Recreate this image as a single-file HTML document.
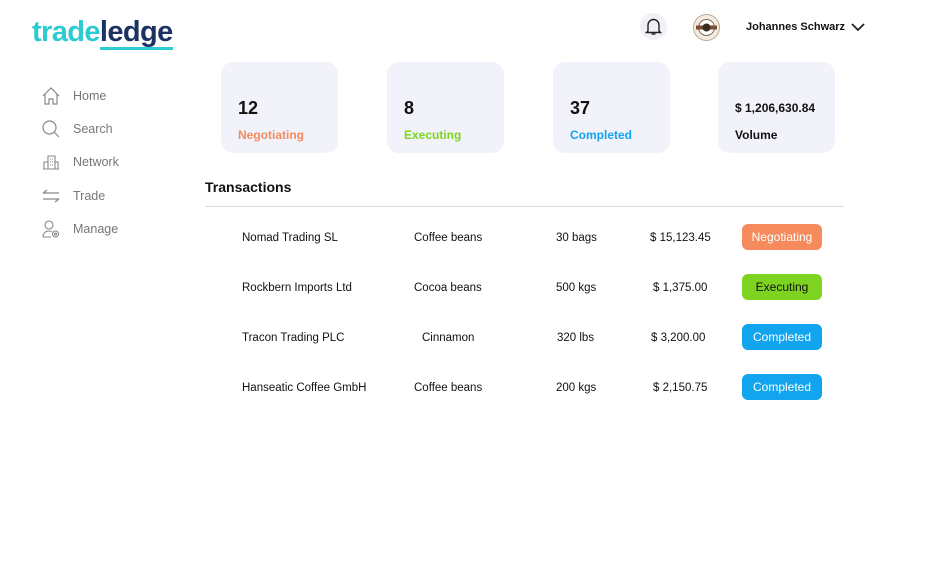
<!DOCTYPE html>
<html><head><style>
body{margin:0;width:926px;height:568px;background:#fff;font-family:"Liberation Sans",sans-serif;position:relative;overflow:hidden;color:#111}
.a{position:absolute}
.logo{left:32px;top:16px;font-size:29px;font-weight:bold;letter-spacing:-0.6px;line-height:32px}
.nav{left:42px;color:#777;font-size:12.5px}
.nav span{position:absolute;left:31px;top:2px}
.card{top:62px;width:117px;height:91px;background:#f2f3fa;border-radius:12px}
.card .n{position:absolute;left:17px;top:36px;font-size:18px;font-weight:bold}
.card .l{position:absolute;left:17px;top:66px;font-size:12px;font-weight:bold}
.row{left:242px;font-size:11.5px;width:600px;height:26px;line-height:26px}
.row div{position:absolute;top:1px}
.row .btn{top:0}
.btn{position:absolute;left:500px;width:80px;height:26px;border-radius:6px;color:#fff;text-align:center;line-height:26px;font-size:12px}
</style></head><body>
<div class="a logo"><span style="color:#2ccbd2">trade</span><span style="color:#1c3263;border-bottom:3px solid #2ccbd2;display:inline-block;line-height:30px">ledge</span></div>

<div class="a" style="left:640px;top:13px;width:27px;height:27px;border-radius:50%;background:#f0f1f6"></div>
<svg class="a" style="left:645px;top:17px" width="17" height="19" viewBox="0 0 17 19" fill="none" stroke="#222" stroke-width="1.4"><path d="M3 14V8a5.5 5.5 0 0 1 11 0v6l1.5 1.5h-14z"/><path d="M6.5 17h4"/></svg>
<svg class="a" style="left:693px;top:14px" width="27" height="27" viewBox="0 0 27 27"><circle cx="13.5" cy="13.5" r="13" fill="#f4ece4" stroke="#b9a997"/><circle cx="13.5" cy="13.5" r="8" fill="#fff" stroke="#8a6a50"/><rect x="3" y="11.5" width="21" height="4" fill="#7a4e30"/><circle cx="13.5" cy="13.5" r="4" fill="#3a2a20"/></svg>
<div class="a" style="left:746px;top:21px;font-size:11px;font-weight:bold">Johannes Schwarz</div>
<svg class="a" style="left:851px;top:23px" width="14" height="9" viewBox="0 0 14 9" fill="none" stroke="#222" stroke-width="1.8"><path d="M1 1l6 6 6-6"/></svg>

<div class="a nav" style="top:87px"><svg width="18" height="18" viewBox="0 0 18 18" fill="none" stroke="#888" stroke-width="1.2"><path d="M1 9L9 1l8 8M3 7v10h4v-5h4v5h4V7"/></svg><span>Home</span></div>
<div class="a nav" style="top:120px"><svg width="18" height="18" viewBox="0 0 18 18" fill="none" stroke="#888" stroke-width="1.2"><circle cx="7.5" cy="7.5" r="6.5"/><path d="M12.5 12.5L17 17"/></svg><span>Search</span></div>
<div class="a nav" style="top:153px"><svg width="18" height="18" viewBox="0 0 18 18" fill="none" stroke="#888" stroke-width="1.1"><path d="M1 16h16M2 16V9h4M6 16V3h7v13M13 9h3v7M8 6h1M10 6h1M8 9h1M10 9h1M8 12h1M10 12h1"/></svg><span>Network</span></div>
<div class="a nav" style="top:187px"><svg width="18" height="18" viewBox="0 0 18 18" fill="none" stroke="#888" stroke-width="1.2"><path d="M1 6h16M1 6l4-3M17 12H1M17 12l-4 3"/></svg><span>Trade</span></div>
<div class="a nav" style="top:220px"><svg width="18" height="18" viewBox="0 0 18 18" fill="none" stroke="#888" stroke-width="1.1"><circle cx="7" cy="5" r="4"/><path d="M1 17c0-4 3-6 6-6 1 0 2 .2 3 .7M1 17h8"/><circle cx="13.5" cy="14" r="3"/><circle cx="13.5" cy="14" r="1"/></svg><span>Manage</span></div>

<div class="a card" style="left:221px"><div class="n">12</div><div class="l" style="color:#f58b5c">Negotiating</div></div>
<div class="a card" style="left:387px"><div class="n">8</div><div class="l" style="color:#7ed321">Executing</div></div>
<div class="a card" style="left:553px"><div class="n">37</div><div class="l" style="color:#12a4ee">Completed</div></div>
<div class="a card" style="left:718px"><div class="n" style="font-size:12px;top:39px">$ 1,206,630.84</div><div class="l" style="color:#111">Volume</div></div>

<div class="a" style="left:205px;top:179px;font-size:14px;font-weight:bold">Transactions</div>
<div class="a" style="left:205px;top:206px;width:639px;height:1px;background:#ddd"></div>

<div class="a row" style="top:224px"><div style="left:0">Nomad Trading SL</div><div style="left:172px">Coffee beans</div><div style="left:314px">30 bags</div><div style="left:408px">$ 15,123.45</div><div class="btn" style="background:#f58b5c">Negotiating</div></div>
<div class="a row" style="top:274px"><div style="left:0">Rockbern Imports Ltd</div><div style="left:172px">Cocoa beans</div><div style="left:314px">500 kgs</div><div style="left:411px">$ 1,375.00</div><div class="btn" style="background:#7ed321;color:#111">Executing</div></div>
<div class="a row" style="top:324px"><div style="left:0">Tracon Trading PLC</div><div style="left:180px">Cinnamon</div><div style="left:315px">320 lbs</div><div style="left:409px">$ 3,200.00</div><div class="btn" style="background:#12a4ee">Completed</div></div>
<div class="a row" style="top:374px"><div style="left:0">Hanseatic Coffee GmbH</div><div style="left:172px">Coffee beans</div><div style="left:314px">200 kgs</div><div style="left:411px">$ 2,150.75</div><div class="btn" style="background:#12a4ee">Completed</div></div>
</body></html>
